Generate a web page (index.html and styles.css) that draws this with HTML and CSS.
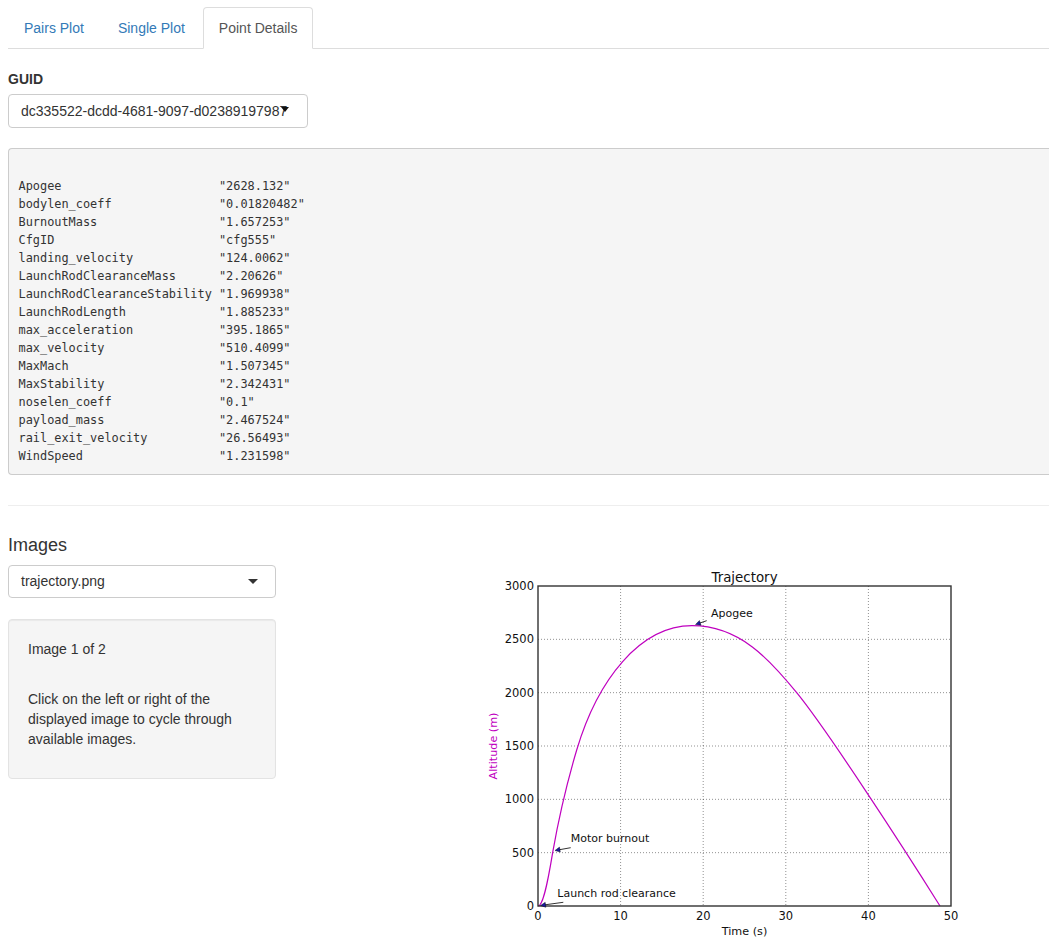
FILE: index.html
```
<!DOCTYPE html>
<html>
<head>
<meta charset="utf-8">
<title>Point Details</title>
<link rel="stylesheet" href="styles.css">
</head>
<body>
<div class="page">
  <ul class="tabs">
    <li class="tab"><a href="#">Pairs Plot</a></li>
    <li class="tab"><a href="#">Single Plot</a></li>
    <li class="tab active"><a href="#">Point Details</a></li>
  </ul>

  <div class="field">
    <label class="field-label">GUID</label>
    <div class="guid-select">dc335522-dcdd-4681-9097-d02389197987<span class="native-caret"></span></div>
  </div>

  <pre class="out">

Apogee                      "2628.132"
bodylen_coeff               "0.01820482"
BurnoutMass                 "1.657253"
CfgID                       "cfg555"
landing_velocity            "124.0062"
LaunchRodClearanceMass      "2.20626"
LaunchRodClearanceStability "1.969938"
LaunchRodLength             "1.885233"
max_acceleration            "395.1865"
max_velocity                "510.4099"
MaxMach                     "1.507345"
MaxStability                "2.342431"
noselen_coeff               "0.1"
payload_mass                "2.467524"
rail_exit_velocity          "26.56493"
WindSpeed                   "1.231598"</pre>

  <hr class="divider">

  <div class="images">
    <div class="images-side">
      <h4 class="images-title">Images</h4>
      <div class="img-select">trajectory.png<span class="sel-caret"></span></div>
      <div class="well">
        <p>Image 1 of 2</p>
        <br>
        <p>Click on the left or right of the displayed image to cycle through available images.</p>
      </div>
    </div>
    <div class="images-main">
      <svg class="plot" width="533" height="400" viewBox="471 546 533 400" xmlns="http://www.w3.org/2000/svg">
        <rect x="471" y="546" width="533" height="400" fill="#fff"/>
        <g stroke="#000" stroke-opacity="0.55" stroke-width="0.8" stroke-dasharray="1 2" fill="none">
          <line x1="620.6" y1="586" x2="620.6" y2="906"/>
          <line x1="703.2" y1="586" x2="703.2" y2="906"/>
          <line x1="785.8" y1="586" x2="785.8" y2="906"/>
          <line x1="868.4" y1="586" x2="868.4" y2="906"/>
          <line x1="538" y1="852.67" x2="951" y2="852.67"/>
          <line x1="538" y1="799.33" x2="951" y2="799.33"/>
          <line x1="538" y1="746" x2="951" y2="746"/>
          <line x1="538" y1="692.67" x2="951" y2="692.67"/>
          <line x1="538" y1="639.33" x2="951" y2="639.33"/>
        </g>
        <path d="M538,906 C542,906 546,893 552.7,852.3 C557,828 566,786 576.7,750 C597.5,680 640,625.7 692,625.7 C740,625.7 770,660 796.7,692.7 C826,728.6 900,842 940,906" fill="none" stroke="#bf00bf" stroke-width="1.2"/>
        <rect x="538" y="586" width="413" height="320" fill="none" stroke="#333" stroke-width="1.4"/>

        <g stroke="#000" stroke-width="0.8">
          <line x1="706.7" y1="620.7" x2="699" y2="623.3"/>
          <line x1="570.7" y1="847.7" x2="559" y2="849.8"/>
          <line x1="563.3" y1="902.3" x2="545" y2="904.8"/>
        </g>
        <g fill="#1a1a9c" stroke="#000" stroke-width="0.4">
          <polygon points="695.5,624.5 699.4,620.5 701.1,625.3"/>
          <polygon points="555,850.5 559.5,847.1 560.3,852.1"/>
          <polygon points="540.5,905.5 545.2,902.3 545.9,907.3"/>
        </g>

        <g class="ticks" font-size="11.5" fill="#111" text-anchor="end">
          <text x="534" y="910">0</text>
          <text x="534" y="856.67">500</text>
          <text x="534" y="803.33">1000</text>
          <text x="534" y="750">1500</text>
          <text x="534" y="696.67">2000</text>
          <text x="534" y="643.33">2500</text>
          <text x="534" y="590">3000</text>
        </g>
        <g class="ticks" font-size="11.5" fill="#111" text-anchor="middle">
          <text x="538" y="919.5">0</text>
          <text x="620.6" y="919.5">10</text>
          <text x="703.2" y="919.5">20</text>
          <text x="785.8" y="919.5">30</text>
          <text x="868.4" y="919.5">40</text>
          <text x="951" y="919.5">50</text>
        </g>
        <text class="ticks" x="744.5" y="582" font-size="13.4" fill="#111" text-anchor="middle">Trajectory</text>
        <text class="ticks" x="744.5" y="935" font-size="11.2" fill="#111" text-anchor="middle">Time (s)</text>
        <text class="ticks" transform="translate(497 746) rotate(-90)" font-size="11.2" fill="#bf00bf" text-anchor="middle">Altitude (m)</text>
        <g class="ticks" font-size="11" fill="#111">
          <text x="711" y="616.5">Apogee</text>
          <text x="570.7" y="842.3">Motor burnout</text>
          <text x="557.3" y="896.7">Launch rod clearance</text>
        </g>
      </svg>
    </div>
  </div>
</div>
</body>
</html>
```
FILE: styles.css
```
html, body {
  margin: 0;
  padding: 0;
  overflow-x: hidden;
}

body {
  font-family: "Liberation Sans", Arial, Helvetica, sans-serif;
  font-size: 14px;
  line-height: 20px;
  color: #333;
  background: #fff;
}

.page {
  padding: 7px 0 0 8px;
}

.tabs {
  display: flex;
  list-style: none;
  margin: 0;
  padding: 0;
  border-bottom: 1px solid #ddd;
}

.tab {
  margin-bottom: -1px;
}

.tab a {
  display: block;
  padding: 10px 15px;
  margin-right: 2px;
  border: 1px solid transparent;
  border-radius: 4px 4px 0 0;
  color: #337ab7;
  text-decoration: none;
  line-height: 20px;
}

.tab.active a {
  color: #555;
  background: #fff;
  border-color: #ddd;
  border-bottom-color: #fff;
}

.field {
  margin: 20px 0 20px;
}

.field-label {
  display: block;
  font-weight: bold;
  margin-bottom: 5px;
}

.guid-select {
  position: relative;
  box-sizing: border-box;
  width: 300px;
  height: 34px;
  padding: 6px 12px;
  border: 1px solid #ccc;
  border-radius: 4px;
  white-space: nowrap;
  overflow: hidden;
  background: #fff;
  color: #333;
}

.native-caret {
  position: absolute;
  left: 272px;
  top: 12px;
  width: 0;
  height: 0;
  border-left: 4px solid transparent;
  border-right: 4px solid transparent;
  border-top: 5px solid #111;
}

.out {
  margin: 0;
  padding: 9.5px;
  border: 1px solid #ccc;
  border-right: 0;
  border-radius: 4px 0 0 4px;
  background: #f5f5f5;
  color: #333;
  font-family: "DejaVu Sans Mono", "Liberation Mono", monospace;
  font-size: 11.9px;
  line-height: 18px;
  white-space: pre;
  overflow: hidden;
}

.divider {
  margin: 30px 0 20px;
  border: 0;
  border-top: 1px solid #eee;
}

.images {
  display: grid;
  grid-template-columns: 268px auto;
  column-gap: 195px;
  align-items: start;
}

.images-title {
  margin: 10px 0 9px;
  font-size: 18px;
  font-weight: normal;
  line-height: 19.8px;
}

.img-select {
  position: relative;
  box-sizing: border-box;
  height: 33px;
  padding: 6px 12px;
  border: 1px solid #ccc;
  border-radius: 4px;
  background: #fff;
  color: #333;
  line-height: 19px;
}

.sel-caret {
  position: absolute;
  right: 17px;
  top: 13px;
  width: 0;
  height: 0;
  border-left: 5px solid transparent;
  border-right: 5px solid transparent;
  border-top: 5px solid #333;
}

.well {
  margin-top: 21px;
  padding: 19px;
  border: 1px solid #e3e3e3;
  border-radius: 4px;
  background: #f5f5f5;
  box-shadow: inset 0 1px 1px rgba(0, 0, 0, 0.05);
}

.well p {
  margin: 0 0 10px;
}

.images-main {
  padding-top: 20px;
}

.plot {
  display: block;
}

.ticks {
  font-family: "DejaVu Sans", sans-serif;
}
```
